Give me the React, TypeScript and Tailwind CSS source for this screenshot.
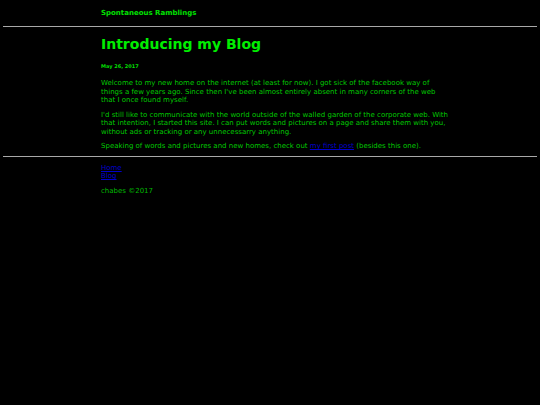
import React from 'react';

const paragraphs: React.ReactNode[] = [
  "Welcome to my new home on the internet (at least for now). I got sick of the facebook way of things a few years ago. Since then I've been almost entirely absent in many corners of the web that I once found myself.",
  "I'd still like to communicate with the world outside of the walled garden of the corporate web. With that intention, I started this site. I can put words and pictures on a page and share them with you, without ads or tracking or any unnecessarry anything.",
  <>
    Speaking of words and pictures and new homes, check out{' '}
    <a href="#" className="text-[#0000cc] underline">my first post</a> (besides this one).
  </>,
];

export default function App() {
  return (
    <div className="min-h-[405px] bg-black font-['DejaVu_Sans',Verdana,sans-serif] text-[#00c800]">
      <header className="mx-auto w-[340px] pt-[9px] pb-[8px] pl-px">
        <div className="text-[7px] font-bold leading-[9px] text-[#00e000]">Spontaneous Ramblings</div>
      </header>
      <hr className="mx-[3px] border-0 border-t border-[#a8a8a8]" />

      <main className="mx-auto w-[340px] pt-[8px] pl-px">
        <h1 className="text-[14px] font-bold leading-[18px] text-[#00ee00]">Introducing my Blog</h1>
        <div className="mt-[10px] text-[5px] font-bold leading-[6px] text-[#00dd00]">May 26, 2017</div>
        <div className="mt-[10px] flex w-[350px] flex-col gap-[6px] pb-[5px] text-[7px] leading-[8.5px]">
          {paragraphs.map((p, i) => (
            <p key={i}>{p}</p>
          ))}
        </div>
      </main>

      <hr className="mx-[3px] border-0 border-t border-[#a8a8a8]" />

      <footer className="mx-auto w-[340px] pt-[7px] pl-px text-[7px] leading-[8.5px]">
        <div>
          <a href="#" className="text-[#0000cc] underline">Home</a>
        </div>
        <div>
          <a href="#" className="text-[#0000cc] underline">Blog</a>
        </div>
        <div className="mt-[6px] text-[#00b800]">chabes ©2017</div>
      </footer>
    </div>
  );
}
